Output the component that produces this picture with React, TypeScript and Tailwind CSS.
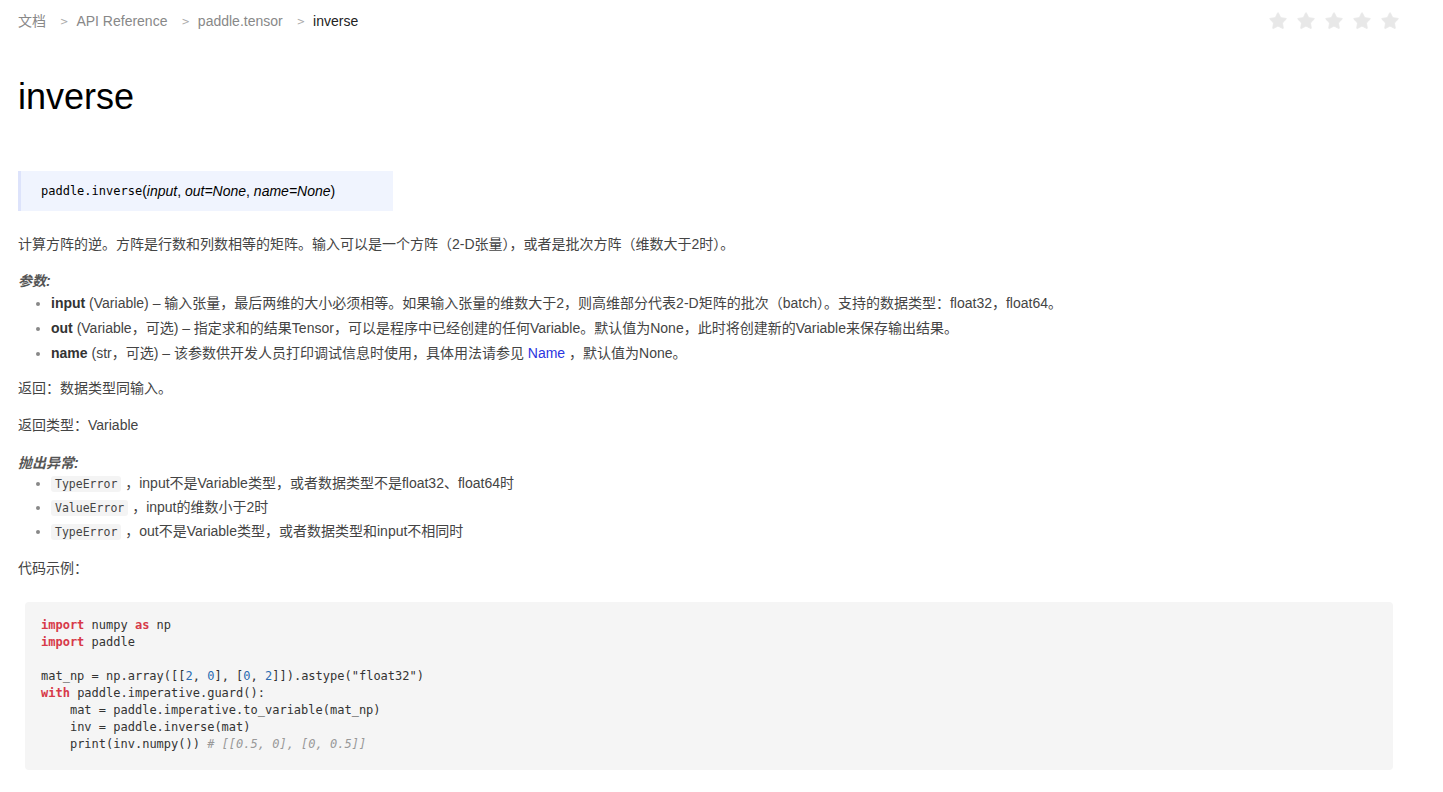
import { Star } from "lucide-react";

const sans = { fontFamily: '"Liberation Sans", "Noto Sans CJK SC", sans-serif' };

function Crumbs() {
  const items = ["文档", "API Reference", "paddle.tensor"];
  return (
    <div className="flex items-center h-[42px] text-[14px] text-[#888]">
      {items.map((t) => (
        <span key={t} className="flex items-center">
          <span>{t}</span>
          <span className="ml-[14px] mr-[8px] text-[10px] text-[#aaa] font-['DejaVu_Sans']">&gt;</span>
        </span>
      ))}
      <span className="text-[#222]">inverse</span>
    </div>
  );
}

function Stars() {
  return (
    <div className="flex gap-[8px]">
      {[0, 1, 2, 3, 4].map((i) => (
        <Star key={i} size={20} strokeWidth={1} className="fill-[#e8e8e8] text-[#e8e8e8]" />
      ))}
    </div>
  );
}

function Code({ children }: { children: string }) {
  return (
    <code className="bg-[#f4f4f4] rounded-[3px] px-[4px] py-[1px] font-['DejaVu_Sans_Mono'] text-[11.5px] leading-[16px] text-[#444]">
      {children}
    </code>
  );
}

const kw = "text-[#d73a49] font-bold";
const num = "text-[#2a6bb0]";

export default function App() {
  return (
    <div style={sans} className="bg-white min-h-screen px-[18px] text-[#444]">
      <div className="flex items-center justify-between pr-[25px]">
        <Crumbs />
        <Stars />
      </div>

      <h1 className="mt-[33px] text-[36px] leading-[44px] text-black">inverse</h1>

      <div className="mt-[52px] w-[375px] h-[40px] flex items-center bg-[#f0f4fe] border-l-[3px] border-[#dde3fb] pl-[20px] text-[14px] text-black">
        <span className="font-['DejaVu_Sans_Mono'] text-[12px]">paddle.inverse</span>
        <span>(</span>
        <em>input</em>
        <span>,&nbsp;</span>
        <em>out=None</em>
        <span>,&nbsp;</span>
        <em>name=None</em>
        <span>)</span>
      </div>

      <p className="mt-[21px] text-[14px] leading-[24px]">
        计算方阵的逆。方阵是行数和列数相等的矩阵。输入可以是一个方阵（2-D张量），或者是批次方阵（维数大于2时）。
      </p>

      <div className="mt-[15px] text-[14px] leading-[20px] font-bold italic text-[#555]">参数:</div>
      <ul className="list-disc pl-[33px] text-[14px] leading-[25px] marker:text-[#888]">
        <li>
          <strong className="text-[#333]">input</strong> (Variable) – 输入张量，最后两维的大小必须相等。如果输入张量的维数大于2，则高维部分代表2-D矩阵的批次（batch）。支持的数据类型：float32，float64。
        </li>
        <li>
          <strong className="text-[#333]">out</strong> (Variable，可选) – 指定求和的结果Tensor，可以是程序中已经创建的任何Variable。默认值为None，此时将创建新的Variable来保存输出结果。
        </li>
        <li>
          <strong className="text-[#333]">name</strong> (str，可选) – 该参数供开发人员打印调试信息时使用，具体用法请参见 <a className="text-[#2b35e0]">Name</a> ，默认值为None。
        </li>
      </ul>

      <p className="mt-[10px] text-[14px] leading-[24px]">返回：数据类型同输入。</p>
      <p className="mt-[13px] text-[14px] leading-[24px]">返回类型：Variable</p>

      <div className="mt-[16px] text-[14px] leading-[20px] font-bold italic text-[#555]">抛出异常:</div>
      <ul className="-mt-[2px] list-disc pl-[33px] text-[14px] leading-[24px] marker:text-[#888]">
        <li>
          <Code>TypeError</Code> ，input不是Variable类型，或者数据类型不是float32、float64时
        </li>
        <li>
          <Code>ValueError</Code> ，input的维数小于2时
        </li>
        <li>
          <Code>TypeError</Code> ，out不是Variable类型，或者数据类型和input不相同时
        </li>
      </ul>

      <p className="mt-[13px] text-[14px] leading-[24px]">代码示例：</p>

      <pre className="mt-[22px] ml-[7px] w-[1368px] bg-[#f5f5f5] rounded-[4px] pl-[16px] pt-[15px] pb-[17px] font-['DejaVu_Sans_Mono'] text-[12px] leading-[17px] text-[#333]">
        <span className={kw}>import</span> numpy <span className={kw}>as</span> np{"\n"}
        <span className={kw}>import</span> paddle{"\n"}
        {"\n"}
        mat_np = np.array([[<span className={num}>2</span>, <span className={num}>0</span>], [<span className={num}>0</span>, <span className={num}>2</span>]]).astype(&quot;float32&quot;){"\n"}
        <span className={kw}>with</span> paddle.imperative.guard():{"\n"}
        {"    "}mat = paddle.imperative.to_variable(mat_np){"\n"}
        {"    "}inv = paddle.inverse(mat){"\n"}
        {"    "}print(inv.numpy()) <span className="italic text-[#999]"># [[0.5, 0], [0, 0.5]]</span>
      </pre>
    </div>
  );
}
